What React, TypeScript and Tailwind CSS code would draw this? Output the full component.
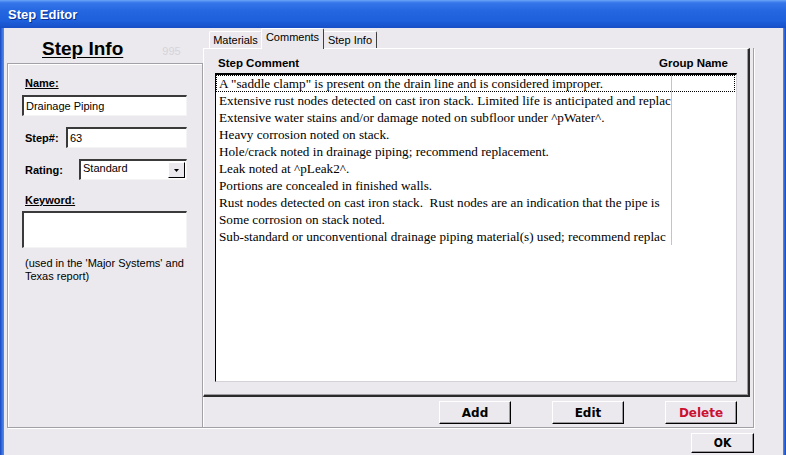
import React from "react";

const rows: string[] = [
  'A "saddle clamp" is present on the drain line and is considered improper.',
  "Extensive rust nodes detected on cast iron stack. Limited life is anticipated and replac",
  "Extensive water stains and/or damage noted on subfloor under ^pWater^.",
  "Heavy corrosion noted on stack.",
  "Hole/crack noted in drainage piping; recommend replacement.",
  "Leak noted at ^pLeak2^.",
  "Portions are concealed in finished walls.",
  "Rust nodes detected on cast iron stack.  Rust nodes are an indication that the pipe is",
  "Some corrosion on stack noted.",
  "Sub-standard or unconventional drainage piping material(s) used; recommend replac",
];

const inputCls =
  "bg-white border-t-2 border-l-2 border-t-[#3a3a3a] border-l-[#3a3a3a] border-r border-b border-r-[#f4f4f4] border-b-[#f4f4f4] text-[11px] leading-[13px]";

const btnCls =
  "flex items-center justify-center bg-[#ebe9ed] border-t border-l border-t-white border-l-white border-r border-b border-r-black border-b-black shadow-[inset_-1px_-1px_0_#9d9ba0] font-['DejaVu_Sans',sans-serif] font-bold text-[12px] leading-none";

function Tab({ label, active }: { label: string; active?: boolean }) {
  if (active) {
    return (
      <div className="relative z-20 -ml-[1px] -mb-[1px] w-[63px] h-[21px] bg-[#ebe9ed] border-t border-l border-t-white border-l-white border-r border-r-[#404040] rounded-t-[2px] flex items-start justify-center pt-[2px] text-[11px] leading-[13px]">
        {label}
      </div>
    );
  }
  return (
    <div className="w-[53px] h-[17px] bg-[#ebe9ed] border-t border-l border-t-white border-l-white border-r border-r-[#404040] rounded-t-[2px] flex items-start justify-center pt-[2px] text-[11px] leading-[13px] -ml-[1px] first:ml-0">
      {label}
    </div>
  );
}

export default function App() {
  return (
    <div className="w-[786px] h-[455px] overflow-hidden flex flex-col bg-[#ebe9ed] font-['Liberation_Sans',Arial,sans-serif] text-black">
      {/* Title bar */}
      <div className="h-[28px] shrink-0 flex items-center pl-[8px] bg-[linear-gradient(180deg,#6aa4f7_0%,#3576ea_10%,#2466e0_40%,#1e5fdb_75%,#164fc6_100%)]">
        <span className="text-white font-bold text-[13px] leading-none [text-shadow:1px_1px_0_#0b2f8c]">
          Step Editor
        </span>
      </div>

      <div className="flex-1 flex min-h-0">
        {/* left frame */}
        <div className="w-[4px] bg-[linear-gradient(90deg,#1846c0,#3570de,#5b8ce6)]" />

        <div className="flex-1 flex flex-col">
          <div className="flex ml-[3px]">
            {/* Left column */}
            <div className="w-[196px] flex flex-col">
              <div className="h-[35px] flex items-baseline pt-[10px] pl-[35px] gap-[39px]">
                <span className="text-[19px] leading-[22px] font-bold underline underline-offset-[2px]">
                  Step Info
                </span>
                <span className="text-[11px] leading-[13px] text-[#d6d4da]">995</span>
              </div>
              <div className="h-[365px] border border-[#a3a1a8] shadow-[inset_1px_1px_0_#fff,1px_1px_0_#fff] flex flex-col">
                <div className="mt-[12px] ml-[17px] text-[11px] leading-[14px] font-bold underline">Name:</div>
                <div className={`mt-[5px] ml-[14px] w-[165px] h-[21px] pl-[2px] pt-[3px] ${inputCls}`}>
                  Drainage Piping
                </div>

                <div className="mt-[11px] ml-[17px] flex items-center h-[21px]">
                  <span className="w-[41px] text-[11px] leading-[14px] font-bold">Step#:</span>
                  <div className={`w-[121px] h-[21px] pl-[2px] pt-[3px] ${inputCls}`}>63</div>
                </div>

                <div className="mt-[11px] ml-[17px] flex items-center h-[21px]">
                  <span className="w-[54px] text-[11px] leading-[14px] font-bold">Rating:</span>
                  <div className={`w-[108px] h-[21px] flex items-start justify-between pl-[2px] ${inputCls}`}>
                    <span className="pt-[1px]">Standard</span>
                    <div className="mt-[1px] mr-[1px] w-[17px] h-[16px] bg-[#ebe9ed] border-t border-l border-t-white border-l-white border-r border-b border-r-black border-b-black flex items-center justify-center">
                      <svg width="5" height="3" viewBox="0 0 5 3">
                        <path d="M0 0H5L2.5 3Z" fill="#000" />
                      </svg>
                    </div>
                  </div>
                </div>

                <div className="mt-[13px] ml-[17px] text-[11px] leading-[14px] font-bold underline">Keyword:</div>
                <div className={`mt-[4px] ml-[14px] w-[165px] h-[37px] ${inputCls}`} />
                <div className="mt-[9px] ml-[17px] text-[11px] leading-[13px]">
                  (used in the 'Major Systems' and
                  <br />
                  Texas report)
                </div>
              </div>
            </div>

            {/* Right column */}
            <div className="w-[551px] flex flex-col">
              <div className="relative z-10 h-[20px] flex items-end pl-[6px]">
                <Tab label="Materials" />
                <Tab label="Comments" active />
                <div className="w-[54px] h-[17px] -ml-[1px] bg-[#ebe9ed] border-t border-l border-t-white border-l-white border-r border-r-[#404040] rounded-t-[2px] flex items-start justify-center pt-[2px] text-[11px] leading-[13px]">
                  Step Info
                </div>
              </div>
              <div className="h-[380px] border-r border-b border-[#a3a1a8] shadow-[1px_1px_0_#fff] flex flex-col">
                {/* tab panel */}
                <div className="w-[547px] h-[349px] border-t border-l border-t-white border-l-white border-r-2 border-b-2 border-r-[#2a2a2a] border-b-[#2a2a2a] shadow-[inset_-1px_-1px_0_#9d9ba0] flex flex-col pl-[11px]">
                  <div className="w-[522px] h-[24px] flex items-end justify-between pl-[3px] pr-[9px] pb-[3px] text-[11.5px] leading-[14px] font-bold">
                    <span>Step Comment</span>
                    <span>Group Name</span>
                  </div>
                  <div className="w-[522px] h-[309px] bg-white border-t-2 border-l border-t-black border-l-black border-r border-b border-r-[#d4d2d8] border-b-[#d4d2d8] font-['Liberation_Serif','Times_New_Roman',serif] text-[13.2px] leading-[17px]">
                    {rows.map((r, i) => (
                      <div key={i} className="relative flex h-[17px]">
                        <div className="w-[456px] shrink-0 border-r border-r-[#c4c4c4] overflow-hidden whitespace-pre pl-[3px]">
                          {r}
                        </div>
                        <div className="flex-1" />
                        {i === 0 && (
                          <span className="absolute inset-0 right-[1px] border border-dotted border-black pointer-events-none" />
                        )}
                      </div>
                    ))}
                  </div>
                </div>
                {/* buttons */}
                <div className="flex justify-end gap-[41px] pr-[16px] pt-[4px]">
                  <div className={`w-[72px] h-[23px] ${btnCls}`}>Add</div>
                  <div className={`w-[72px] h-[23px] ${btnCls}`}>Edit</div>
                  <div className={`w-[72px] h-[23px] ${btnCls} text-[#cc1030]`}>Delete</div>
                </div>
              </div>
            </div>
          </div>

          {/* bottom row */}
          <div className="flex justify-end pr-[29px] pt-[5px]">
            <div className={`w-[63px] h-[20px] ${btnCls} [font-stretch:condensed]`}>OK</div>
          </div>
        </div>

        {/* right frame */}
        <div className="w-[3px] bg-[linear-gradient(90deg,#5b8ce6,#2d66d8,#1846c0)]" />
      </div>
    </div>
  );
}
